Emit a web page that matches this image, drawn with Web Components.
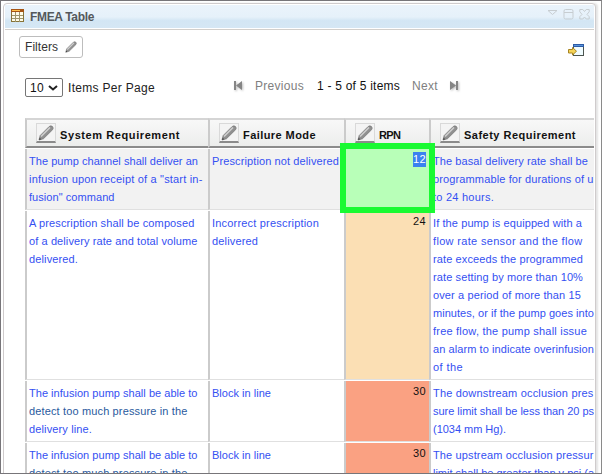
<!DOCTYPE html>
<html lang="en">
<head>
<meta charset="utf-8">
<title>FMEA Table</title>
<style>
body{margin:0;width:602px;height:474px;overflow:hidden;font-family:"Liberation Sans",Arial,sans-serif;font-size:12px;color:#222}
</style>
</head>
<body>
<app-window>
  <title-bar slot="title"><fit-text w="64">FMEA Table</fit-text></title-bar>
  <tool-bar slot="tools"></tool-bar>
  <page-bar slot="tools"></page-bar>
  <data-grid>
    <head-cell><fit-text w="120">System Requirement</fit-text></head-cell>
    <head-cell><fit-text w="73">Failure Mode</fit-text></head-cell>
    <head-cell><fit-text w="21.500">RPN</fit-text></head-cell>
    <head-cell><fit-text w="112">Safety Requirement</fit-text></head-cell>

    <body-cell class="alt"><fit-text w="169">The pump channel shall deliver an</fit-text><fit-text w="173.5">infusion upon receipt of a "start in-</fit-text><fit-text w="85.5">fusion" command</fit-text></body-cell>
    <body-cell class="alt"><fit-text w="127">Prescription not delivered</fit-text></body-cell>
    <number-cell selected><fit-text w="13">12</fit-text></number-cell>
    <body-cell class="alt"><fit-text w="155">The basal delivery rate shall be</fit-text><fit-text w="160.5">programmable for durations of u</fit-text><fit-text w="61">to 24 hours.</fit-text></body-cell>

    <body-cell><fit-text w="165.5">A prescription shall be composed</fit-text><fit-text w="168.5">of a delivery rate and total volume</fit-text><fit-text w="49">delivered.</fit-text></body-cell>
    <body-cell><fit-text w="107">Incorrect prescription</fit-text><fit-text w="46">delivered</fit-text></body-cell>
    <number-cell style="--fill:#fbdfb4"><fit-text w="13">24</fit-text></number-cell>
    <body-cell><fit-text w="149">If the pump is equipped with a</fit-text><fit-text w="149.5">flow rate sensor and the flow</fit-text><fit-text w="150">rate exceeds the programmed</fit-text><fit-text w="150">rate setting by more than 10%</fit-text><fit-text w="148">over a period of more than 15</fit-text><fit-text w="161">minutes, or if the pump goes into</fit-text><fit-text w="154">free flow, the pump shall issue</fit-text><fit-text w="161">an alarm to indicate overinfusion</fit-text><fit-text w="30">of the</fit-text></body-cell>

    <body-cell><fit-text w="168.5">The infusion pump shall be able to</fit-text><fit-text w="158.5" style="color:#2a5a9e">detect too much pressure in the</fit-text><fit-text w="63">delivery line.</fit-text></body-cell>
    <body-cell><fit-text w="59">Block in line</fit-text></body-cell>
    <number-cell style="--fill:#faa182"><fit-text w="13">30</fit-text></number-cell>
    <body-cell><fit-text w="160.5">The downstream occlusion pres</fit-text><fit-text w="161">sure limit shall be less than 20 ps</fit-text><fit-text w="73">(1034 mm Hg).</fit-text></body-cell>

    <body-cell><fit-text w="168.5">The infusion pump shall be able to</fit-text><fit-text w="158.5" style="color:#2a5a9e">detect too much pressure in the</fit-text></body-cell>
    <body-cell><fit-text w="59">Block in line</fit-text></body-cell>
    <number-cell style="--fill:#faa182"><fit-text w="13">30</fit-text></number-cell>
    <body-cell><fit-text w="160.5">The upstream occlusion pressur</fit-text><fit-text w="161">limit shall be greater than v psi (a</fit-text></body-cell>
  </data-grid>
</app-window>
<script>
function define(name, html, setup) {
  const t = document.createElement('template');
  t.innerHTML = html;
  customElements.define(name, class extends HTMLElement {
    constructor() {
      super();
      this.attachShadow({mode: 'open'}).append(t.content.cloneNode(true));
    }
    connectedCallback() { if (setup) setup(this); }
  });
}

define('app-window', `<style>
:host{display:block;box-sizing:border-box;width:602px;height:474px;padding:2px 2px 0;border:1px solid #777579;border-right-color:#8a8a8a;background:#fff;overflow:hidden}
.panel{box-sizing:border-box;height:480px;width:593px;border:1px solid #cfcbcc;border-radius:4px 4px 0 0;padding:1px 1px 0;box-shadow:2px 0 2px #e4e4e4;overflow:hidden;background:#fff}
</style><div class="panel"><slot name="title"></slot><slot name="tools"></slot><slot></slot></div>`);

define('title-bar', `<style>
:host{display:flex;align-items:center;box-sizing:border-box;height:23px;margin-bottom:2px;padding:0 4px 0 6px;background:linear-gradient(#eaf3fb 0,#e6f1fa 52%,#d3e6f4 68%,#d5e7f4);box-shadow:0 1px #fff,0 2px #d2cfcb;font-weight:bold;color:#54585c}
svg{flex:none}.name{margin:1px auto 0 6px}
.ctl{margin:-4px 0 0 5px}
</style>
<svg width="13" height="13" style="margin-top:-3px"><rect x=".5" y=".5" width="12" height="12" fill="#fffce8" stroke="#887438"/><path d="M0 0h13v3H0z" fill="#a65414"/><path d="M1 1h8v1H1z" fill="#ffc34c"/><path d="M4.5 3v10M8.5 3v10M1 6.5h11M1 9.5h11" stroke="#9e966c"/></svg>
<span class="name"><slot></slot></span>
<svg class="ctl" width="11" height="11" fill="none" stroke="#c7cdd1"><path d="M1 1.5h9L5.5 5.5z"/></svg>
<svg class="ctl" width="11" height="11" fill="none" stroke="#c7cdd1"><rect x="1" y=".5" width="9" height="9.5" rx="1.5"/><path d="M1 3.5h9"/></svg>
<svg class="ctl" width="11" height="11" fill="none" stroke="#c7cdd1"><path d="M.8.5h3l1.7 2 1.7-2h3v2.3L8 5.4l2.2 2.3v2.3h-3l-1.7-2-1.7 2h-3V7.700L3 5.400.8 2.800z"/></svg>`);

define('pencil-icon', `<style>:host{display:inline-block;flex:none;width:var(--s,12px);height:var(--s,12px)}svg{display:block;width:100%;height:100%}</style>
<svg viewBox="0 0 16 16"><path d="M1 15l1.200-4.500L11.200 1.500Q13 .2 14.500 1.600 15.800 3 14.600 4.700L5.500 13.700z" fill="#909090" stroke="#7c7c7c" stroke-width=".8"/><path d="M3 11.500l9-9" stroke="#cfcfcf" stroke-width="1.600"/><path d="M1 15l.7-2.300 1.600 1.600z" fill="#444"/></svg>`);

define('tool-bar', `<style>
:host{display:flex;justify-content:space-between;padding:6px 9px 0 14px;height:41px;box-sizing:border-box}
button{box-sizing:border-box;display:flex;align-items:center;gap:7px;width:64px;height:22px;padding:0 0 1px 5px;border:1px solid #bdbdbd;border-radius:3px;background:#fff;font:12px "Liberation Sans",Arial,sans-serif;color:#333}
</style><button><fit-text w="33">Filters</fit-text><pencil-icon></pencil-icon></button>
<svg width="17" height="13" style="margin:8px 0 0"><rect x="5.500" y=".5" width="10" height="11" fill="#f0fcff" stroke="#4c5550"/><path d="M5 0h11v3H5z" fill="#2d5ba6"/><path d="M6 1h9v1H6z" fill="#5794db"/><path d="M.5 5.500h4V3.500l4 3.700-4 3.800V9h-4z" fill="#f5d457" stroke="#a78422"/></svg>`);

define('page-bar', `<style>
:host{display:flex;height:47px;box-sizing:border-box;padding:7px 0 0 20px;color:#222}
.sel{box-sizing:border-box;display:flex;align-items:center;gap:4px;width:38px;height:19px;border:1px solid #767676;border-radius:2px;padding-left:4px;background:#fff;color:#111}
.per{margin:3px 0 0 5px}.nav{display:flex;height:16px;align-items:center;margin-left:79px;color:#808080}
.nav svg{filter:drop-shadow(1px 1px 1px #bbb)}
.prev{margin-left:12px}.count{margin-left:13px;color:#111}.next{margin:0 12px 0 12px}
</style>
<div class="sel"><fit-text w="14">10</fit-text><svg width="10" height="6"><path d="M1 1l4 3.500L9 1" fill="none" stroke="#222" stroke-width="2"/></svg></div>
<div class="per"><fit-text w="87">Items Per Page</fit-text></div>
<div class="nav"><svg width="9" height="10" fill="#858585"><path d="M0 0h2v9H0zM8 0v9L2 4.500z"/></svg>
<fit-text class="prev" w="49">Previous</fit-text><fit-text class="count" w="83">1 - 5 of 5 items</fit-text><fit-text class="next" w="26">Next</fit-text>
<svg width="9" height="10" fill="#858585"><path d="M6 0h2v9H6zM0 0v9l6-4.500z"/></svg></div>`);

define('data-grid', `<style>
:host{display:grid;font-size:11px;width:569px;margin-left:20px;grid-template-columns:183px 136px 85px 173px;grid-template-rows:31px 62px 170px 62px 62px;overflow:hidden}
</style><slot></slot>`);

define('head-cell', `<style>
:host{display:flex;box-sizing:border-box;align-items:flex-start;height:30px;border-left:2px solid #cbcbcb;border-top:2px solid #d5d5d5;border-bottom:2px solid #8b8b8b;background:linear-gradient(#f8f8f8,#ecedec);padding:3px 0 0 9px;gap:4px;font-weight:bold;color:#111}
.edit{box-sizing:border-box;width:20px;height:20px;padding:1px;border:1px solid #d9d9d9;border-bottom:2px solid #8b8b8b;background:#f4f4f4;--s:16px}
.name{margin-top:6px}
</style><div class="edit"><pencil-icon></pencil-icon></div><div class="name"><slot></slot></div>`);

define('body-cell', `<style>
:host{display:block;box-sizing:border-box;border-left:2px solid #cbcbcb;border-bottom:1px solid #e0e0e0;margin-bottom:1px;padding:3px 0 0 2px;line-height:18px;color:#3450f2;background:#fff}
:host(.alt){background:#f2f2f2}
</style><slot></slot>`);

define('number-cell', `<style>
:host{display:flex;justify-content:flex-end;align-items:flex-start;box-sizing:border-box;position:relative;border-left:2px solid #cbcbcb;border-bottom:1px solid #e0e0e0;margin-bottom:1px;background:var(--fill);padding:3px 3px 0 0;line-height:15px;color:#111}
:host([selected]){background:#b8ffb8;color:#fff;z-index:2}
:host([selected]) span{background:#3b82f0}
:host([selected])::after{content:"";position:absolute;box-sizing:border-box;left:-6px;top:-6px;width:95px;height:70px;border:6px solid #19fa32;pointer-events:none}
</style><span><slot></slot></span>`);

// Sets letter spacing so that a line of text fills the width given in "w".
define('fit-text', `<style>:host{display:block;white-space:nowrap}span{display:inline-block}</style><span><slot></slot></span>`, el => {
  const span = el.shadowRoot.querySelector('span');
  const n = el.textContent.length;
  const natural = span.getBoundingClientRect().width;
  const w = +el.getAttribute('w');
  if (!natural || !n) return;
  span.style.letterSpacing = (w - natural) / n + 'px';
  el.style.width = w + 'px';
});
</script>
</body>
</html>
